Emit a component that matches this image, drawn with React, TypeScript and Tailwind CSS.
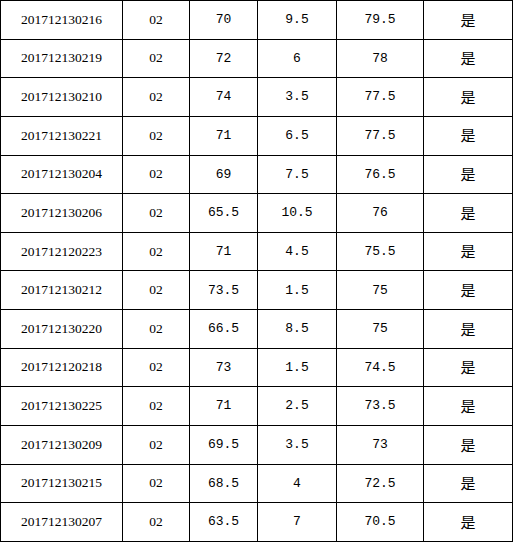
import React from "react";

const rows: [string, string, string, string, string][] = [
  ["201712130216", "02", "70", "9.5", "79.5"],
  ["201712130219", "02", "72", "6", "78"],
  ["201712130210", "02", "74", "3.5", "77.5"],
  ["201712130221", "02", "71", "6.5", "77.5"],
  ["201712130204", "02", "69", "7.5", "76.5"],
  ["201712130206", "02", "65.5", "10.5", "76"],
  ["201712120223", "02", "71", "4.5", "75.5"],
  ["201712130212", "02", "73.5", "1.5", "75"],
  ["201712130220", "02", "66.5", "8.5", "75"],
  ["201712120218", "02", "73", "1.5", "74.5"],
  ["201712130225", "02", "71", "2.5", "73.5"],
  ["201712130209", "02", "69.5", "3.5", "73"],
  ["201712130215", "02", "68.5", "4", "72.5"],
  ["201712130207", "02", "63.5", "7", "70.5"],
];

export default function App() {
  return (
    <div className="w-[513px] h-[542px] bg-white flex flex-col border-t border-l border-black text-black">
      {rows.map((r, i) => (
        <div key={i} className="flex flex-1 border-b border-black">
          <div className="w-[122px] border-r border-black flex items-center justify-center text-[13.5px] font-['Liberation_Serif',serif]">
            {r[0]}
          </div>
          <div className="w-[67px] border-r border-black flex items-center justify-center text-[13.5px] font-['Liberation_Serif',serif]">
            {r[1]}
          </div>
          <div className="w-[68px] border-r border-black flex items-center justify-center text-[13px] font-['Liberation_Mono',monospace]">
            {r[2]}
          </div>
          <div className="w-[79px] border-r border-black flex items-center justify-center text-[13px] font-['Liberation_Mono',monospace]">
            {r[3]}
          </div>
          <div className="w-[87px] border-r border-black flex items-center justify-center text-[13px] font-['Liberation_Mono',monospace]">
            {r[4]}
          </div>
          <div className="w-[89px] border-r border-black flex items-center justify-center text-[15px] font-['Noto_Sans_CJK_SC',sans-serif]">
            是
          </div>
        </div>
      ))}
    </div>
  );
}
